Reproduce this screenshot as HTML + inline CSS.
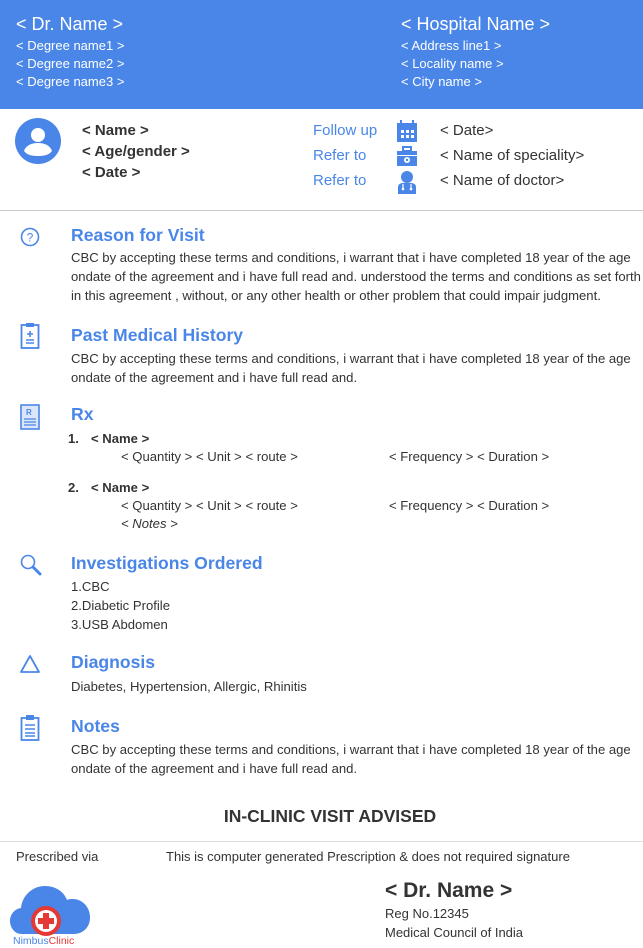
<!DOCTYPE html>
<html><head><meta charset="utf-8"><style>
*{margin:0;padding:0;box-sizing:border-box}
body{width:643px;height:948px;position:relative;background:#fff;font-family:"Liberation Sans",Arial,sans-serif;color:#333;overflow:hidden}
.a{position:absolute;white-space:nowrap}
.hd{position:absolute;left:0;top:0;width:643px;height:109px;background:#4a86e8;color:#fff}
.h1{font-size:18px}
.sm{font-size:13px}
.b{font-weight:bold}
.blue{color:#4a86e8}
.t{font-size:17.6px;font-weight:bold;color:#4a86e8}
.p{font-size:13.1px;line-height:19px;color:#333}
.r{font-size:13.1px}
svg{position:absolute}
</style></head><body>
<div class="hd">
 <div class="a h1" style="left:16px;top:14px">&lt; Dr. Name &gt;</div>
 <div class="a sm" style="left:16px;top:38px">&lt; Degree name1 &gt;</div>
 <div class="a sm" style="left:16px;top:56px">&lt; Degree name2 &gt;</div>
 <div class="a sm" style="left:16px;top:74px">&lt; Degree name3 &gt;</div>
 <div class="a h1" style="left:401px;top:14px">&lt; Hospital Name &gt;</div>
 <div class="a sm" style="left:401px;top:38px">&lt; Address line1 &gt;</div>
 <div class="a sm" style="left:401px;top:56px">&lt; Locality name &gt;</div>
 <div class="a sm" style="left:401px;top:74px">&lt; City name &gt;</div>
</div>

<svg style="left:15px;top:118px" width="46" height="46" viewBox="0 0 46 46"><circle cx="23" cy="23" r="23" fill="#4a86e8"/><circle cx="23" cy="17" r="7" fill="#fff"/><path d="M9 33c2-6 8-8 14-8s12 2 14 8c-3 4-8 5-14 5s-11-1-14-5z" fill="#fff"/></svg>
<div class="a b" style="left:82px;top:122px;font-size:15px">&lt; Name &gt;</div>
<div class="a b" style="left:82px;top:143px;font-size:15px">&lt; Age/gender &gt;</div>
<div class="a b" style="left:82px;top:164px;font-size:15px">&lt; Date &gt;</div>

<div class="a blue" style="left:313px;top:122px;font-size:15px">Follow up</div>
<div class="a blue" style="left:313px;top:147px;font-size:15px">Refer to</div>
<div class="a blue" style="left:313px;top:172px;font-size:15px">Refer to</div>
<svg style="left:396px;top:120px" width="22" height="22" viewBox="0 0 22 22"><rect x="1" y="3" width="20" height="19" fill="#4a86e8"/><rect x="4" y="0" width="2" height="4" fill="#4a86e8"/><rect x="16" y="0" width="2" height="4" fill="#4a86e8"/><g fill="#fff"><rect x="5" y="10" width="3" height="3"/><rect x="10" y="10" width="3" height="3"/><rect x="15" y="10" width="3" height="3"/><rect x="5" y="15" width="3" height="3"/><rect x="10" y="15" width="3" height="3"/><rect x="15" y="15" width="3" height="3"/></g></svg>
<svg style="left:396px;top:146px" width="22" height="20" viewBox="0 0 22 20"><rect x="7" y="1" width="8" height="4" fill="none" stroke="#4a86e8" stroke-width="2"/><rect x="1" y="5" width="20" height="15" fill="#4a86e8"/><rect x="1" y="9" width="20" height="1" fill="#fff"/><circle cx="11" cy="14" r="3" fill="#fff"/><circle cx="11" cy="14" r="1.2" fill="#4a86e8"/></svg>
<svg style="left:397px;top:170px" width="20" height="24" viewBox="0 0 20 24"><circle cx="10" cy="7" r="6" fill="#4a86e8"/><path d="M1 24v-7c0-3 3-4 5-4h8c2 0 5 1 5 4v7z" fill="#4a86e8"/><path d="M6 14v4M14 14v4" stroke="#fff" stroke-width="1.2" fill="none"/><circle cx="6" cy="19" r="1.3" fill="#fff"/><circle cx="14" cy="19" r="1.3" fill="#fff"/></svg>
<div class="a" style="left:440px;top:122px;font-size:15px">&lt; Date&gt;</div>
<div class="a" style="left:440px;top:147px;font-size:15px">&lt; Name of speciality&gt;</div>
<div class="a" style="left:440px;top:172px;font-size:15px">&lt; Name of doctor&gt;</div>

<div class="a" style="left:0;top:210px;width:643px;height:1px;background:#ccc"></div>

<svg style="left:20px;top:227px" width="20" height="20" viewBox="0 0 20 20"><circle cx="10" cy="10" r="8.5" fill="none" stroke="#4a86e8" stroke-width="1.6"/><text x="10" y="14.5" font-size="12" text-anchor="middle" fill="#4a86e8" font-family="Liberation Sans">?</text></svg>
<div class="a t" style="left:71px;top:225px">Reason for Visit</div>
<div class="a p" style="left:71px;top:248px">CBC by accepting these terms and conditions, i warrant that i have completed 18 year of the age<br>ondate of the agreement and i have full read and. understood the terms and conditions as set forth<br>in this agreement , without, or any other health or other problem that could impair judgment.</div>

<svg style="left:20px;top:322px" width="20" height="28" viewBox="0 0 20 28"><rect x="1.5" y="3" width="17" height="23" fill="none" stroke="#4a86e8" stroke-width="1.8"/><rect x="6" y="1" width="8" height="4" fill="#4a86e8"/><path d="M10 9v6M7 12h6M6 18h8M6 21h8" stroke="#4a86e8" stroke-width="1.6"/></svg>
<div class="a t" style="left:71px;top:325px">Past Medical History</div>
<div class="a p" style="left:71px;top:349px">CBC by accepting these terms and conditions, i warrant that i have completed 18 year of the age<br>ondate of the agreement and i have full read and.</div>

<svg style="left:20px;top:404px" width="20" height="26" viewBox="0 0 20 26"><rect x="1" y="1" width="18" height="24" fill="#dbe6fa" stroke="#4a86e8" stroke-width="1.6"/><text x="6" y="11" font-size="8" font-weight="bold" fill="#4a86e8" font-family="Liberation Sans">R</text><path d="M4 15h12M4 18h12M4 21h12" stroke="#4a86e8" stroke-width="1.2"/></svg>
<div class="a t" style="left:71px;top:404px">Rx</div>
<div class="a b r" style="left:68px;top:431px">1.</div><div class="a b r" style="left:91px;top:431px">&lt; Name &gt;</div>
<div class="a r" style="left:121px;top:449px">&lt; Quantity &gt; &lt; Unit &gt; &lt; route &gt;</div>
<div class="a r" style="left:389px;top:449px">&lt; Frequency &gt; &lt; Duration &gt;</div>
<div class="a b r" style="left:68px;top:480px">2.</div><div class="a b r" style="left:91px;top:480px">&lt; Name &gt;</div>
<div class="a r" style="left:121px;top:498px">&lt; Quantity &gt; &lt; Unit &gt; &lt; route &gt;</div>
<div class="a r" style="left:389px;top:498px">&lt; Frequency &gt; &lt; Duration &gt;</div>
<div class="a r" style="left:121px;top:516px;font-style:italic">&lt; Notes &gt;</div>

<svg style="left:19px;top:553px" width="24" height="24" viewBox="0 0 24 24"><circle cx="9" cy="9" r="6.5" fill="none" stroke="#4a86e8" stroke-width="1.6"/><path d="M14 14l7 7" stroke="#4a86e8" stroke-width="3" stroke-linecap="round"/></svg>
<div class="a t" style="left:71px;top:553px">Investigations Ordered</div>
<div class="a p" style="left:71px;top:577px">1.CBC<br>2.Diabetic Profile<br>3.USB Abdomen</div>

<svg style="left:19px;top:654px" width="22" height="20" viewBox="0 0 22 20"><path d="M11 2L2 18h18z" fill="none" stroke="#4a86e8" stroke-width="1.8" stroke-linejoin="round"/></svg>
<div class="a t" style="left:71px;top:652px">Diagnosis</div>
<div class="a p" style="left:71px;top:677px">Diabetes, Hypertension, Allergic, Rhinitis</div>

<svg style="left:20px;top:714px" width="20" height="28" viewBox="0 0 20 28"><rect x="1.5" y="4" width="17" height="22" fill="none" stroke="#4a86e8" stroke-width="1.8"/><rect x="6" y="1" width="8" height="5" fill="#4a86e8"/><path d="M5 11h10M5 15h10M5 19h10M5 22h10" stroke="#4a86e8" stroke-width="1.5"/></svg>
<div class="a t" style="left:71px;top:716px">Notes</div>
<div class="a p" style="left:71px;top:740px">CBC by accepting these terms and conditions, i warrant that i have completed 18 year of the age<br>ondate of the agreement and i have full read and.</div>

<div class="a b" style="left:0;width:660px;text-align:center;top:806px;font-size:17.5px;color:#333">IN-CLINIC VISIT ADVISED</div>
<div class="a" style="left:0;top:841px;width:643px;height:1px;background:#ddd"></div>
<div class="a" style="left:16px;top:849px;font-size:13px">Prescribed via</div>
<div class="a" style="left:166px;top:849px;font-size:13px">This is computer generated Prescription &amp; does not required signature</div>

<svg style="left:10px;top:882px" width="82" height="56" viewBox="0 0 82 56"><path d="M12 52c-8 0-12-7-12-13s4-12 11-13c1-12 11-22 24-22 11 0 19 6 22 14 2-1 4-1 6-1 9 0 17 8 17 18v1c0 9-7 16-16 16z" fill="#4a86e8"/><circle cx="36" cy="39" r="15" fill="#e53935"/><circle cx="36" cy="39" r="11" fill="#fff"/><path d="M33 31h6v5h5v6h-5v5h-6v-5h-5v-6h5z" fill="#e53935"/></svg>
<div class="a" style="left:13px;top:935px;font-size:10.5px;color:#4a86e8">Nimbus<span style="color:#e53935">Clinic</span></div>

<div class="a" style="left:385px;top:879px;font-size:21px;font-weight:bold;color:#333">&lt; Dr. Name &gt;</div>
<div class="a" style="left:385px;top:906px;font-size:13px">Reg No.12345</div>
<div class="a" style="left:385px;top:925px;font-size:13px">Medical Council of India</div>
</body></html>
